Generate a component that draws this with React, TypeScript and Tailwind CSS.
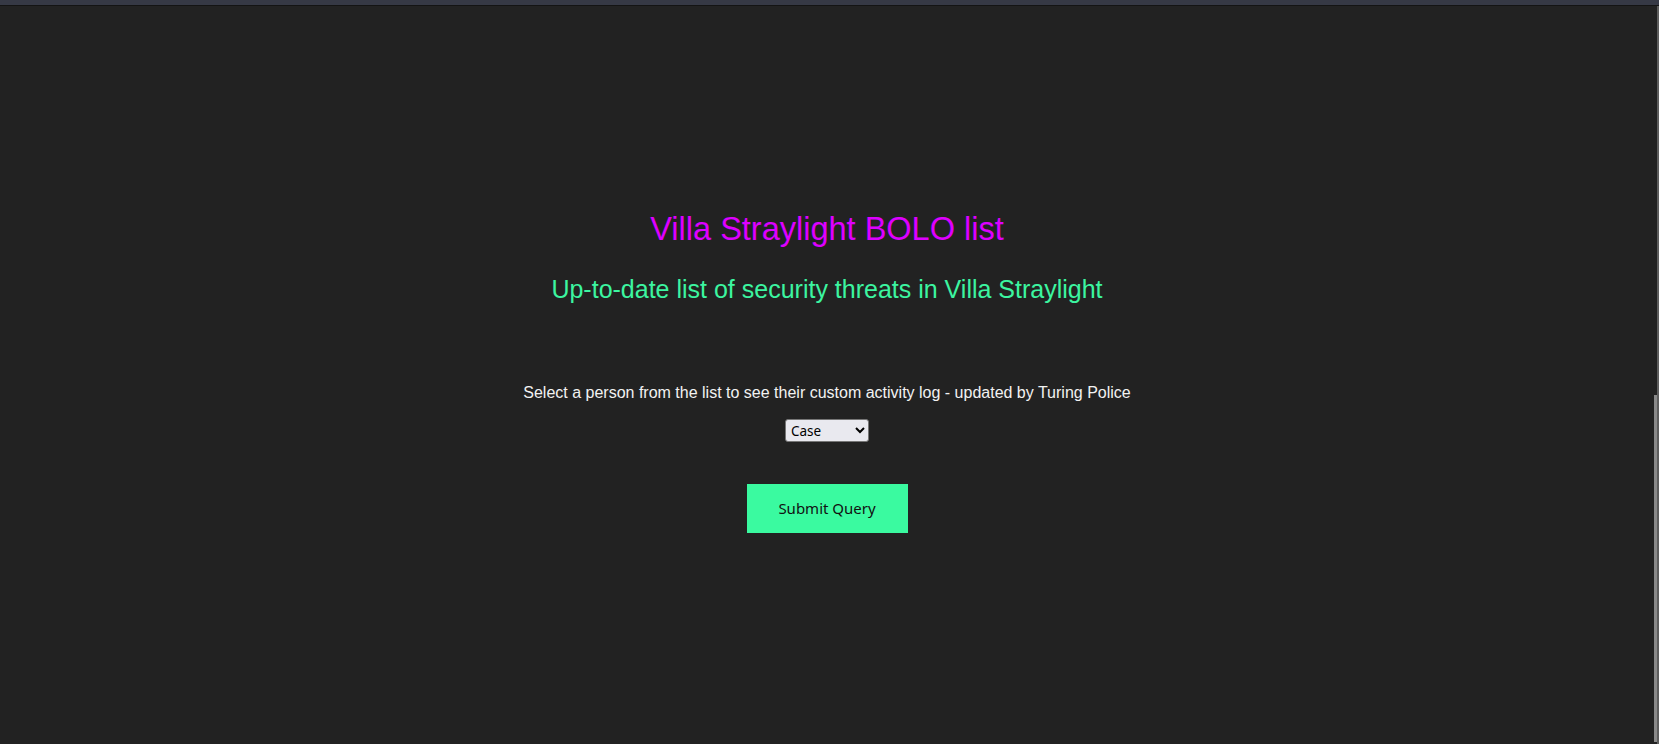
export default function App() {
  return (
    <div className="flex h-[744px] w-[1659px] flex-col overflow-hidden bg-[#222222]">
      <div className="h-[5px] w-full bg-[#363945]" />
      <div className="h-px w-full bg-[#141414]" />
      <div className="flex flex-1">
        <main className="flex flex-1 flex-col items-center pt-[203px] text-center font-['Liberation_Sans',sans-serif]">
          <h1 className="text-[32.5px] leading-[40px] text-[#dd00ff]">Villa Straylight BOLO list</h1>
          <h2 className="mt-[24px] text-[25px] leading-[32px] text-[#3cf5a0]">
            Up-to-date list of security threats in Villa Straylight
          </h2>
          <p className="mt-[76px] text-[16px] leading-[24px] text-[#f2f2f2]">
            Select a person from the list to see their custom activity log - updated by Turing Police
          </p>
          <select
            defaultValue="Case"
            className="mt-[14px] h-[23px] w-[84px] rounded-[3px] border border-[#767676] bg-[#e9e9ef] pl-[1px] font-['Noto_Sans',sans-serif] text-[13.5px] text-black"
          >
            <option>Case</option>
            <option>Molly</option>
            <option>Armitage</option>
            <option>Riviera</option>
          </select>
          <button className="mt-[42px] h-[49px] w-[161px] bg-[#3afaa0] font-['Noto_Sans',sans-serif] text-[15px] text-[#111111]">
            Submit Query
          </button>
        </main>
        <div className="flex w-[5px] flex-col">
          <div className="flex flex-1">
            <div className="flex w-[3px] flex-col">
              <div className="h-[389px]" />
              <div className="flex-1 bg-[#8a8a8a]" />
              <div className="h-[2px]" />
            </div>
            <div className="w-[2px] bg-[#5e5e5e]" />
          </div>
        </div>
      </div>
    </div>
  );
}
